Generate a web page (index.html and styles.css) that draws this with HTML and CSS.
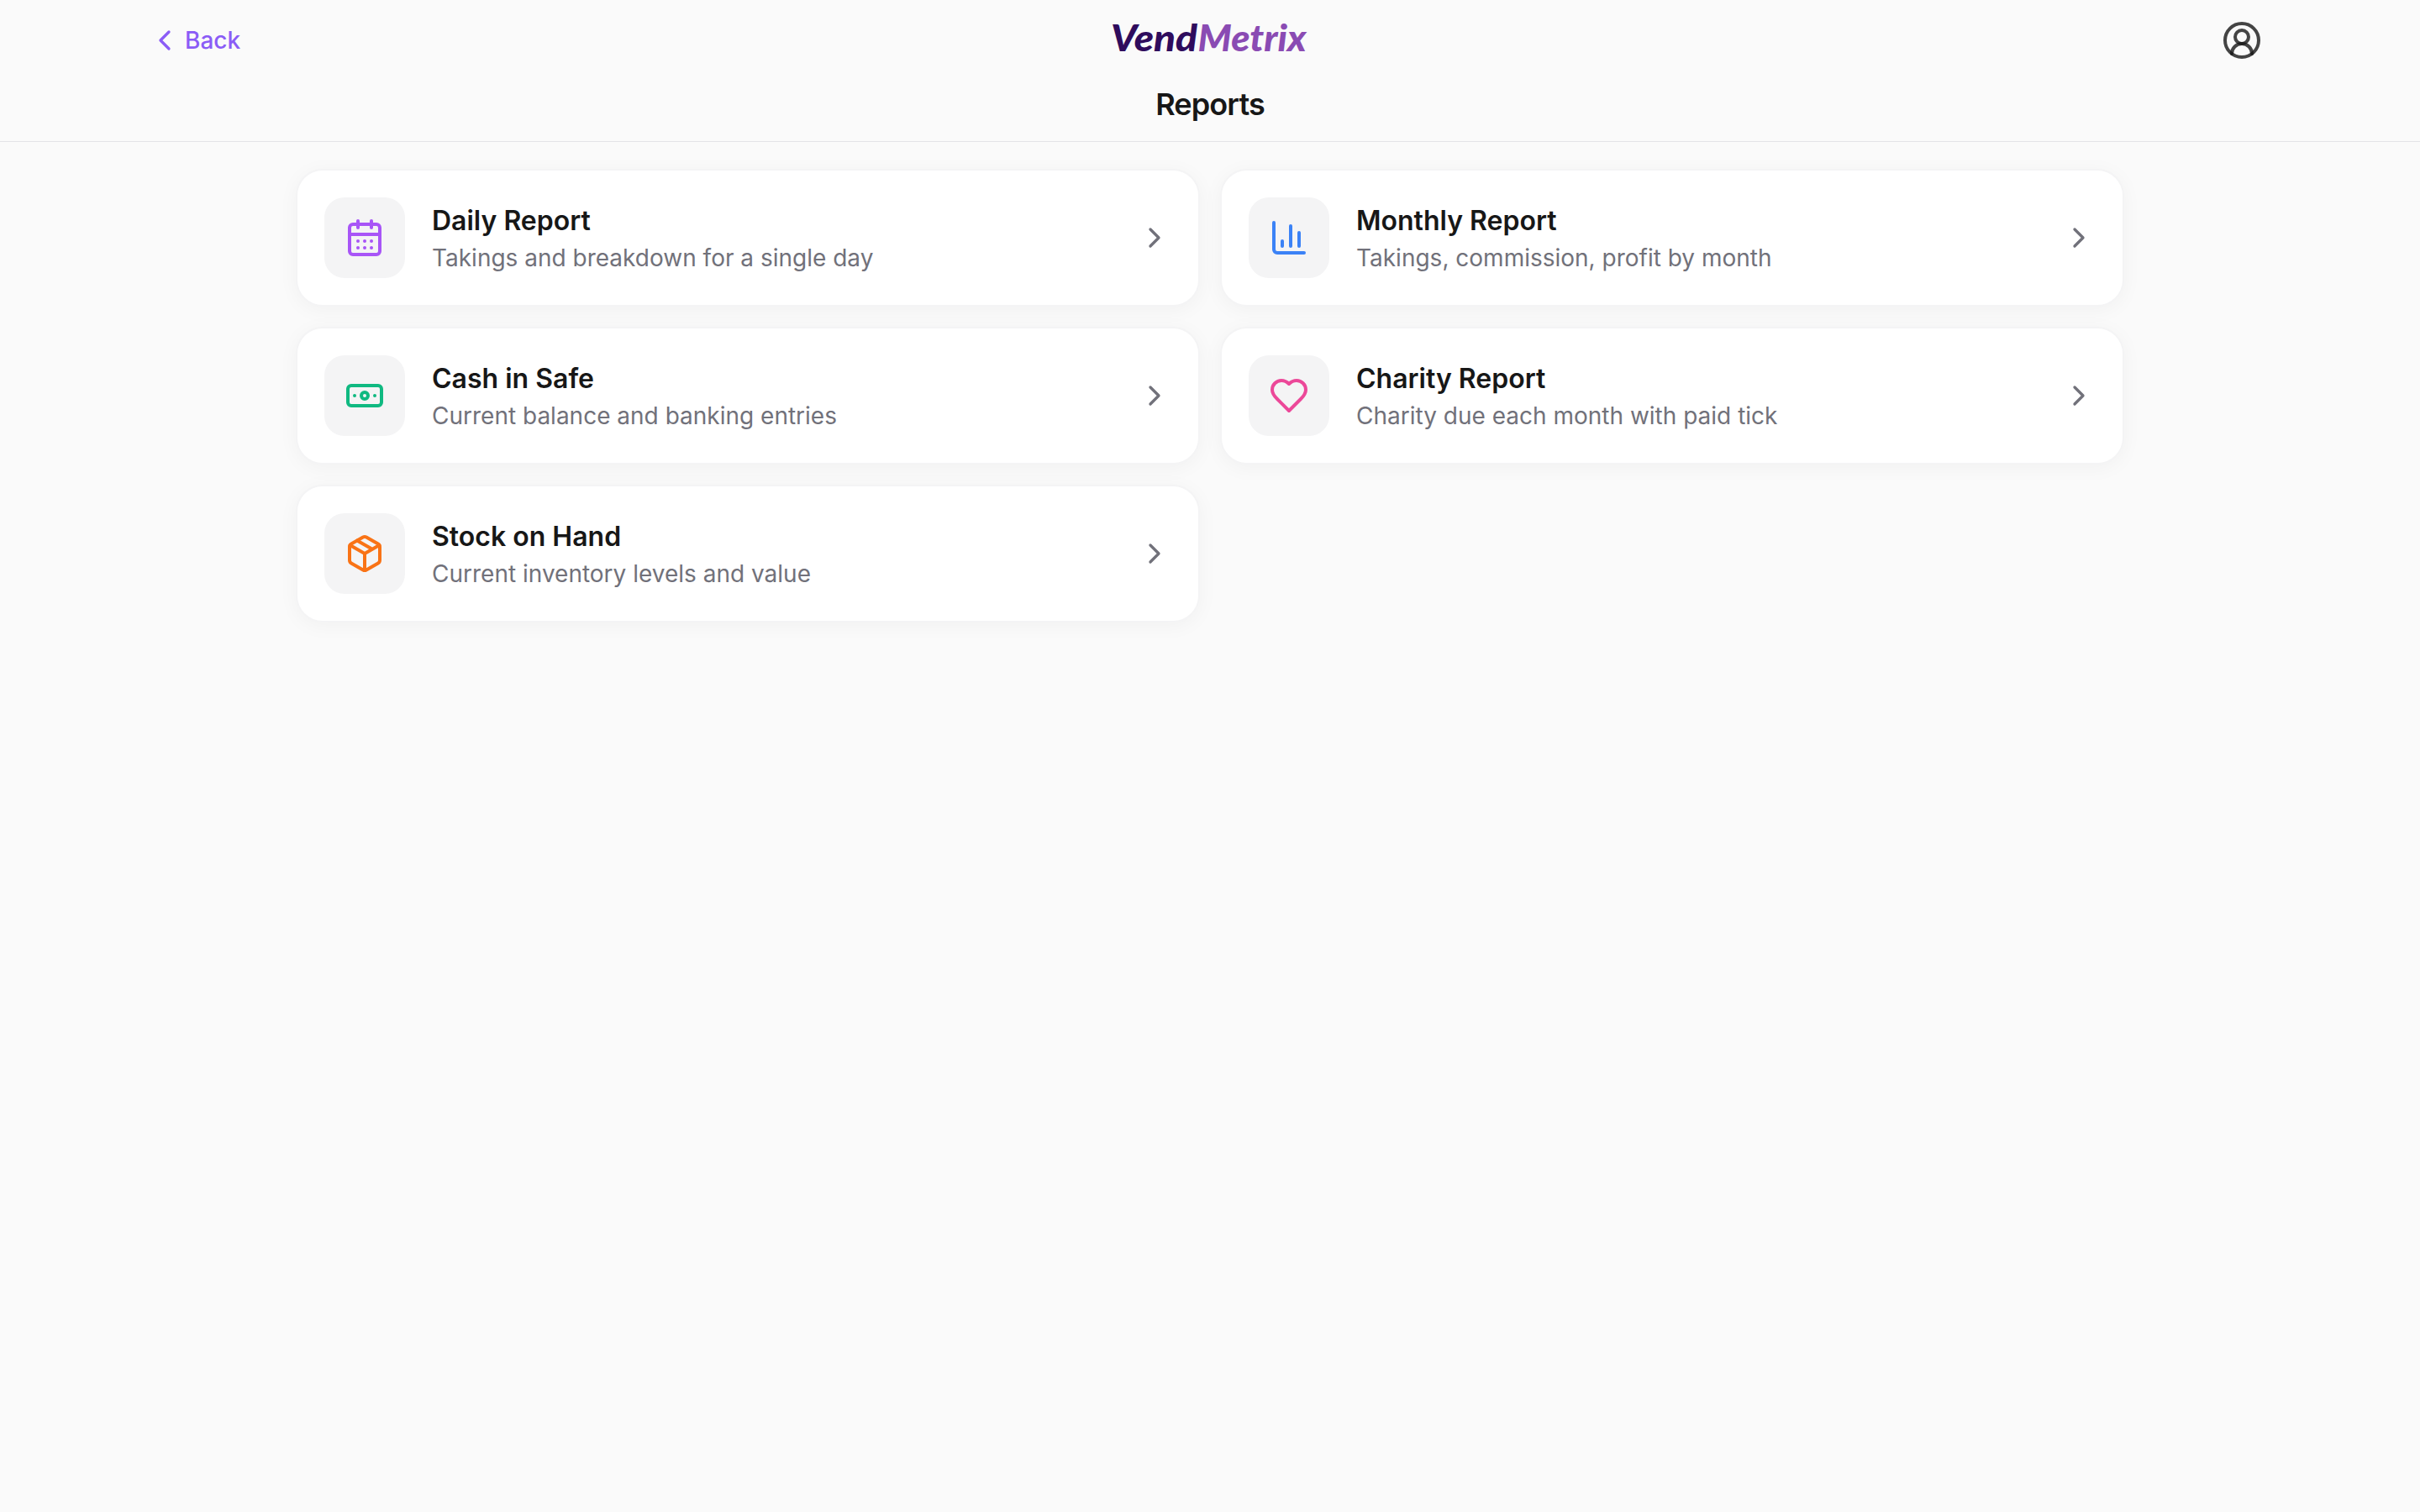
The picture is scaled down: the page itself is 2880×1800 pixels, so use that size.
FILE: index.html
```html
<!DOCTYPE html>
<html lang="en">
<head>
  <meta charset="UTF-8">
  <meta name="viewport" content="width=device-width, initial-scale=1.0">
  <title>Reports - VendMetrix</title>
  <link rel="stylesheet" href="styles.css">
</head>
<body>
  <header class="header">
    <div class="topbar">
      <a class="back" href="#">
        <svg class="icon icon-sm" viewBox="0 0 24 24"><path d="m15 18-6-6 6-6"/></svg>
        Back
      </a>
      <svg class="logo" viewBox="0 0 232 48">
        <text class="logo-vend" x="-2" y="36.5" textLength="103" lengthAdjust="spacingAndGlyphs">Vend</text>
        <text class="logo-metrix" x="101.5" y="36.5" textLength="129" lengthAdjust="spacingAndGlyphs">Metrix</text>
      </svg>
      <button class="account" aria-label="Account">
        <svg class="icon" viewBox="0 0 24 24">
          <path d="M18 20a6 6 0 0 0-12 0"/>
          <circle cx="12" cy="10" r="4"/>
          <circle cx="12" cy="12" r="10"/>
        </svg>
      </button>
    </div>
    <h1 class="title">Reports</h1>
  </header>

  <main class="reports">
    <a class="card" href="#">
      <div class="card-icon purple">
        <svg class="icon" viewBox="0 0 24 24">
          <path d="M8 2v4M16 2v4"/>
          <rect width="18" height="18" x="3" y="4" rx="2"/>
          <path d="M3 10h18M8 14h.01M12 14h.01M16 14h.01M8 18h.01M12 18h.01M16 18h.01"/>
        </svg>
      </div>
      <div class="card-text">
        <h2>Daily Report</h2>
        <p>Takings and breakdown for a single day</p>
      </div>
      <svg class="icon icon-sm chevron" viewBox="0 0 24 24"><path d="m9 18 6-6-6-6"/></svg>
    </a>

    <a class="card" href="#">
      <div class="card-icon blue">
        <svg class="icon" viewBox="0 0 24 24">
          <path d="M3 3v16a2 2 0 0 0 2 2h16M18 17V9M13 17V5M8 17v-3"/>
        </svg>
      </div>
      <div class="card-text">
        <h2>Monthly Report</h2>
        <p>Takings, commission, profit by month</p>
      </div>
      <svg class="icon icon-sm chevron" viewBox="0 0 24 24"><path d="m9 18 6-6-6-6"/></svg>
    </a>

    <a class="card" href="#">
      <div class="card-icon green">
        <svg class="icon" viewBox="0 0 24 24">
          <rect width="20" height="12" x="2" y="6" rx="2"/>
          <circle cx="12" cy="12" r="2"/>
          <path d="M6 12h.01M18 12h.01"/>
        </svg>
      </div>
      <div class="card-text">
        <h2>Cash in Safe</h2>
        <p>Current balance and banking entries</p>
      </div>
      <svg class="icon icon-sm chevron" viewBox="0 0 24 24"><path d="m9 18 6-6-6-6"/></svg>
    </a>

    <a class="card" href="#">
      <div class="card-icon pink">
        <svg class="icon" viewBox="0 0 24 24">
          <path d="M19 14c1.49-1.46 3-3.21 3-5.5A5.5 5.5 0 0 0 16.5 3c-1.76 0-3 .5-4.5 2-1.5-1.5-2.74-2-4.5-2A5.5 5.5 0 0 0 2 8.5c0 2.3 1.5 4.05 3 5.5l7 7Z"/>
        </svg>
      </div>
      <div class="card-text">
        <h2>Charity Report</h2>
        <p>Charity due each month with paid tick</p>
      </div>
      <svg class="icon icon-sm chevron" viewBox="0 0 24 24"><path d="m9 18 6-6-6-6"/></svg>
    </a>

    <a class="card" href="#">
      <div class="card-icon orange">
        <svg class="icon" viewBox="0 0 24 24">
          <path d="M11 21.73a2 2 0 0 0 2 0l7-4A2 2 0 0 0 21 16V8a2 2 0 0 0-1-1.73l-7-4a2 2 0 0 0-2 0l-7 4A2 2 0 0 0 3 8v8a2 2 0 0 0 1 1.73z"/>
          <path d="M12 22V12"/>
          <path d="M3.29 7 12 12l8.71-5M7.5 4.27l9 5.15"/>
        </svg>
      </div>
      <div class="card-text">
        <h2>Stock on Hand</h2>
        <p>Current inventory levels and value</p>
      </div>
      <svg class="icon icon-sm chevron" viewBox="0 0 24 24"><path d="m9 18 6-6-6-6"/></svg>
    </a>
  </main>
</body>
</html>
```

FILE: styles.css
```css
:root {
  --bg: #fafafa;
  --text-primary: #171717;
  --text-secondary: #71717a;
  --accent: #8b5cf6;
  --border-color: #e4e4e7;
}

* {
  box-sizing: border-box;
}

body {
  margin: 0;
  min-height: 100vh;
  background: var(--bg);
  color: var(--text-primary);
  font-family: Inter, "Liberation Sans", sans-serif;
}

h1, h2, p {
  margin: 0;
}

a {
  color: inherit;
  text-decoration: none;
}

.icon {
  display: block;
  flex-shrink: 0;
  width: 48px;
  height: 48px;
  fill: none;
  stroke: currentColor;
  stroke-width: 2;
  stroke-linecap: round;
  stroke-linejoin: round;
}

.icon-sm {
  width: 40px;
  height: 40px;
}

.header {
  height: 169px;
  border-bottom: 1px solid var(--border-color);
}

.topbar {
  display: grid;
  grid-template-columns: 1fr auto 1fr;
  align-items: center;
  height: 96px;
  padding: 0 176px;
}

.back {
  display: flex;
  align-items: center;
  gap: 4px;
  color: var(--accent);
  font-size: 28px;
  font-weight: 500;
}

.logo {
  display: block;
  width: 232px;
  height: 48px;
  overflow: visible;
  font-family: Lato, sans-serif;
  font-size: 43px;
  font-style: italic;
  font-weight: 900;
}

.logo-vend {
  fill: #2f0c5d;
}

.logo-metrix {
  fill: #8a4bb3;
}

.account {
  justify-self: end;
  margin-right: 12px;
  padding: 0;
  border: none;
  background: none;
  color: rgba(23, 23, 23, 0.8);
}

.title {
  font-size: 36px;
  font-weight: 600;
  line-height: 56px;
  letter-spacing: -0.9px;
  text-align: center;
}

.reports {
  display: grid;
  grid-template-columns: 1fr 1fr;
  gap: 24px;
  width: 2176px;
  margin: 32px auto 0;
}

.card {
  display: flex;
  align-items: center;
  gap: 32px;
  height: 164px;
  padding: 32px;
  border: 2px solid #f4f4f5;
  border-radius: 32px;
  background: #fff;
  box-shadow: 0 4px 24px rgba(0, 0, 0, 0.04);
}

.card-icon {
  display: flex;
  align-items: center;
  justify-content: center;
  width: 96px;
  height: 96px;
  border-radius: 24px;
  background: #f4f4f5;
}

.card-text {
  flex: 1;
  padding-top: 4px;
}

.card-text h2 {
  font-size: 32px;
  font-weight: 600;
  line-height: 44px;
}

.card-text p {
  color: var(--text-secondary);
  font-size: 28px;
  line-height: 44px;
}

.chevron {
  color: var(--text-secondary);
}

.purple { color: #a855f7; }
.blue { color: #3b82f6; }
.green { color: #10b981; }
.pink { color: #ec4899; }
.orange { color: #f97316; }
```
